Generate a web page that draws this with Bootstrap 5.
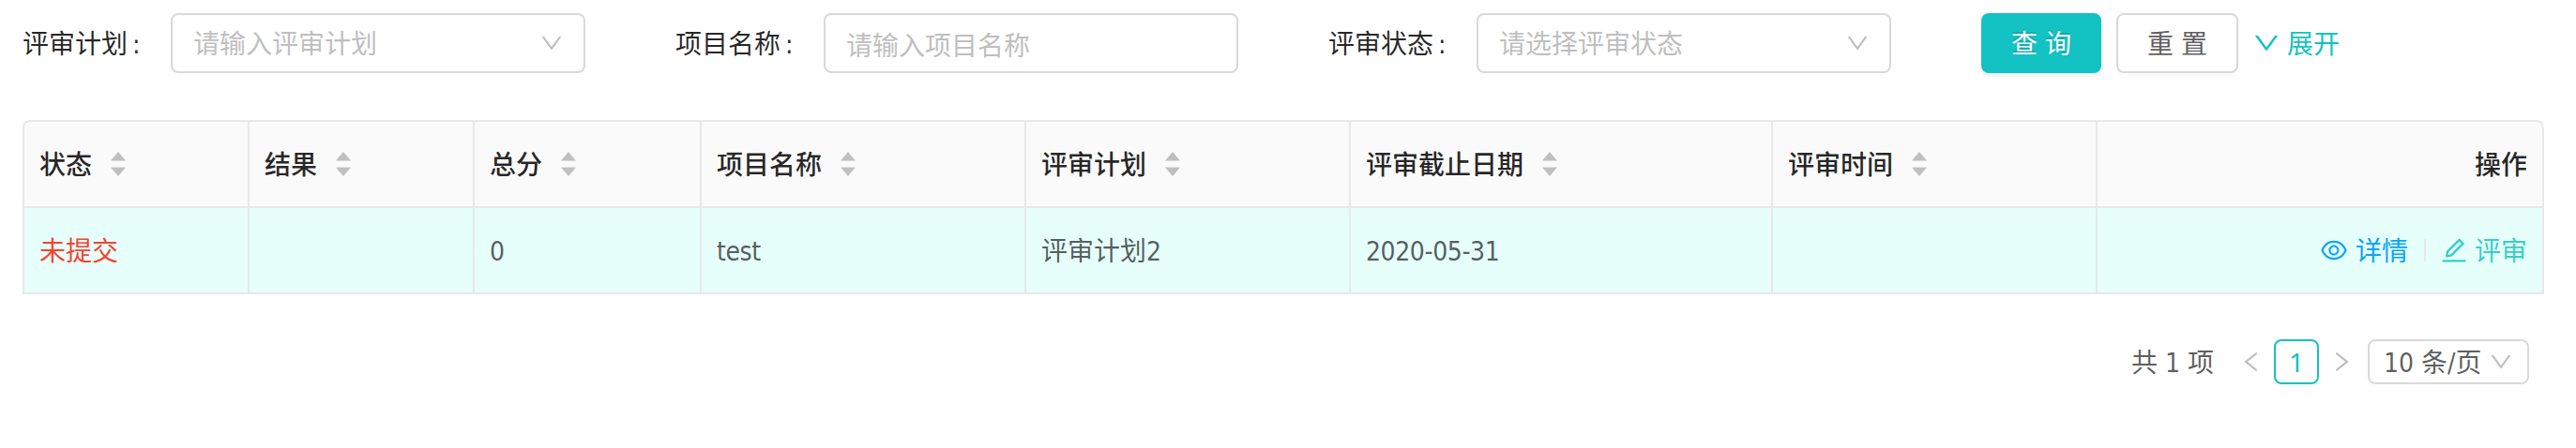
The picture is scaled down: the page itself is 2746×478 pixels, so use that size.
<!DOCTYPE html>
<html lang="zh-CN">
<head>
  <meta charset="UTF-8">
  <meta name="viewport" content="width=device-width, initial-scale=1.0">
  <title>评审列表</title>
  <link href="https://cdn.jsdelivr.net/npm/bootstrap@5.3.2/dist/css/bootstrap.min.css" rel="stylesheet">
  <style>
    body {
      font-family: "DejaVu Sans Condensed", "Noto Sans CJK SC", sans-serif;
      font-size: 28px;
      line-height: 42px;
      color: rgba(0, 0, 0, .65);
      background-color: #fff;
    }

    .page {
      padding: 14px 34px 0 24px;
    }

    .latin {
      letter-spacing: -.4px;
    }

    /* 文字与图标的视觉居中 */
    .txt {
      padding-top: 4px;
    }

    .icon {
      width: 28px;
      height: 28px;
      fill: currentColor;
      flex: none;
    }

    .icon-lg {
      width: 32px;
      height: 32px;
    }

    /* 查询条件 */
    .search-item {
      width: 696px;
      height: 64px;
    }

    .search-item label {
      width: 158px;
      color: rgba(0, 0, 0, .85);
    }

    .search-item label::after {
      content: ":";
      margin-left: 5px;
    }

    .field {
      width: 442px;
      height: 64px;
      padding: 0 20px 0 22px;
      border: 2px solid #d9d9d9;
      border-radius: 8px;
      font-size: 28px;
      line-height: 42px;
      color: #bfbfbf;
    }

    input.field {
      padding-top: 6px;
    }

    .field::placeholder {
      color: #bfbfbf;
    }

    .btn-search, .btn-reset {
      height: 64px;
      padding: 4px 0 0;
      border-radius: 8px;
      font-size: 28px;
      line-height: 42px;
    }

    .btn-search {
      width: 128px;
      color: #fff;
      background-color: #13c2c2;
      border: 2px solid #13c2c2;
      text-shadow: 0 -2px 0 rgba(0, 0, 0, .12);
      box-shadow: 0 4px 0 rgba(0, 0, 0, .045);
    }

    .btn-reset {
      width: 130px;
      margin-left: 16px;
      color: rgba(0, 0, 0, .65);
      background-color: #fff;
      border: 2px solid #d9d9d9;
      box-shadow: 0 4px 0 rgba(0, 0, 0, .015);
    }

    .expand {
      margin-left: 14px;
      gap: 6px;
      color: #13c2c2;
    }

    /* 表格 */
    .review-table {
      width: 2688px;
      margin: 50px 0 0;
      table-layout: fixed;
      border-collapse: separate;
      border-spacing: 0;
      border-top: 2px solid #e8e8e8;
      border-left: 2px solid #e8e8e8;
      border-radius: 8px 8px 0 0;
      color: rgba(0, 0, 0, .65);
    }

    .review-table > thead > tr > th,
    .review-table > tbody > tr > td {
      height: 92px;
      padding: 0 16px;
      border: solid #e8e8e8;
      border-width: 0 2px 2px 0;
      vertical-align: middle;
    }

    .review-table > thead > tr > th {
      background-color: #fafafa;
      color: rgba(0, 0, 0, .85);
      font-weight: 500;
    }

    .review-table > tbody > tr > td {
      background-color: #e6fffb;
      color: rgba(0, 0, 0, .65);
    }

    .review-table > tbody > tr > td.state {
      color: #f5432f;
    }

    .review-table > tbody > tr > td:not(:last-child) {
      padding-top: 4px;
    }

    .review-table th:first-child {
      border-top-left-radius: 6px;
    }

    .review-table th:last-child {
      border-top-right-radius: 8px;
    }

    .sorter {
      width: 16px;
      height: 26px;
      margin-left: 20px;
      fill: #bfbfbf;
    }

    .action {
      gap: 6px;
      color: #36cfc9;
    }

    .action-view {
      gap: 7px;
      color: #09a5fa;
    }

    .split {
      width: 2px;
      height: 24px;
      margin: 0 14px 0 17px;
      background-color: #e8e8e8;
    }

    /* 分页 */
    .pager {
      height: 48px;
      margin-top: 48px;
      padding-right: 16px;
    }

    .pager-step {
      width: 48px;
      color: #bfbfbf;
    }

    .pager-current {
      width: 48px;
      height: 48px;
      border: 2px solid #13c2c2;
      border-radius: 8px;
      color: #13c2c2;
      font-family: "Noto Sans", sans-serif;
    }

    .pager-size {
      width: 172px;
      height: 48px;
      margin-left: 4px;
      padding: 0 14px 0 15px;
      border: 2px solid #d9d9d9;
      border-radius: 8px;
      white-space: nowrap;
    }

    .pager-size .icon {
      color: #bfbfbf;
    }
  </style>
</head>
<body>
  <svg class="d-none">
    <symbol id="i-down" viewBox="0 0 1024 1024"><path d="M884 256h-75c-5.1 0-9.9 2.5-12.9 6.6L512 654.2 227.9 262.6c-3-4.1-7.8-6.6-12.9-6.6h-75c-6.5 0-10.3 7.4-6.5 12.7l352.6 486.1c12.8 17.6 39 17.6 51.7 0l352.6-486.1c3.9-5.3.1-12.7-6.4-12.7z"/></symbol>
    <symbol id="i-left" viewBox="0 0 1024 1024"><path d="M724 218.3V141c0-6.7-7.7-10.4-12.9-6.3L260.3 486.8a31.86 31.86 0 0 0 0 50.3l450.8 352.1c5.3 4.1 12.9.4 12.9-6.3v-77.3c0-4.9-2.3-9.6-6.1-12.6l-360-281 360-281.1c3.8-3 6.1-7.7 6.1-12.6z"/></symbol>
    <symbol id="i-right" viewBox="0 0 1024 1024"><path d="M765.7 486.8L314.9 134.7A7.97 7.97 0 0 0 302 141v77.3c0 4.9 2.3 9.6 6.1 12.6l360 281.1-360 281.1c-3.9 3-6.1 7.7-6.1 12.6V883c0 6.7 7.7 10.4 12.9 6.3l450.8-352.1a31.96 31.96 0 0 0 0-50.4z"/></symbol>
    <symbol id="i-eye" viewBox="0 0 1024 1024"><path d="M942.2 486.2C847.4 286.5 704.1 186 512 186c-192.2 0-335.4 100.5-430.2 300.3a60.3 60.3 0 0 0 0 51.5C176.6 737.5 319.9 838 512 838c192.2 0 335.4-100.5 430.2-300.3 7.7-16.2 7.7-35 0-51.5zM512 766c-161.3 0-279.4-81.8-362.7-254C232.6 339.8 350.7 258 512 258c161.3 0 279.4 81.8 362.7 254C791.5 684.2 673.4 766 512 766zm-4-430c-97.2 0-176 78.8-176 176s78.8 176 176 176 176-78.8 176-176-78.8-176-176-176zm0 288c-61.9 0-112-50.1-112-112s50.1-112 112-112 112 50.1 112 112-50.1 112-112 112z"/></symbol>
    <symbol id="i-edit" viewBox="0 0 1024 1024"><path d="M257.7 752c2 0 4-.2 6-.5L431.9 722c2-.4 3.9-1.3 5.3-2.8l423.9-423.9a9.96 9.96 0 0 0 0-14.1L694.9 114.9c-1.9-1.9-4.4-2.9-7.1-2.9s-5.2 1-7.1 2.9L256.8 538.8c-1.5 1.5-2.4 3.3-2.8 5.3l-29.5 168.2a33.5 33.5 0 0 0 9.4 29.8c6.6 6.4 14.9 9.9 23.8 9.9zm67.4-174.4L687.8 215l73.3 73.3-362.7 362.6-88.9 15.7 15.6-89zM880 836H144c-17.7 0-32 14.3-32 32v36c0 4.4 3.6 8 8 8h784c4.4 0 8-3.6 8-8v-36c0-17.7-14.3-32-32-32z"/></symbol>
    <symbol id="i-sort" viewBox="0 0 16 26"><path d="M8 0l8 9.5H0zM8 26l8-9.5H0z"/></symbol>
  </svg>

  <div class="page">
    <!-- 查询条件 -->
    <form class="d-flex align-items-center">
      <div class="search-item d-flex align-items-center">
        <label class="txt">评审计划</label>
        <div class="field d-flex align-items-center justify-content-between">
          <span class="txt">请输入评审计划</span>
          <svg class="icon"><use href="#i-down"/></svg>
        </div>
      </div>
      <div class="search-item d-flex align-items-center">
        <label class="txt" for="project-name">项目名称</label>
        <input type="text" class="form-control field" id="project-name" placeholder="请输入项目名称">
      </div>
      <div class="search-item d-flex align-items-center">
        <label class="txt">评审状态</label>
        <div class="field d-flex align-items-center justify-content-between">
          <span class="txt">请选择评审状态</span>
          <svg class="icon"><use href="#i-down"/></svg>
        </div>
      </div>
      <button type="button" class="btn btn-search">查 询</button>
      <button type="button" class="btn btn-reset">重 置</button>
      <a class="expand d-flex align-items-center text-decoration-none">
        <svg class="icon icon-lg"><use href="#i-down"/></svg>
        <span class="txt">展开</span>
      </a>
    </form>

    <!-- 评审列表 -->
    <table class="table review-table">
      <colgroup id="review-cols"></colgroup>
      <thead>
        <tr id="review-head"></tr>
      </thead>
      <tbody>
        <tr>
          <td class="state">未提交</td>
          <td></td>
          <td class="latin">0</td>
          <td class="latin">test</td>
          <td>评审计划2</td>
          <td class="latin">2020-05-31</td>
          <td></td>
          <td>
            <div class="d-flex align-items-center justify-content-end">
              <a class="action action-view d-flex align-items-center text-decoration-none"><svg class="icon icon-lg"><use href="#i-eye"/></svg><span class="txt">详情</span></a>
              <span class="split"></span>
              <a class="action d-flex align-items-center text-decoration-none"><svg class="icon icon-lg"><use href="#i-edit"/></svg><span class="txt">评审</span></a>
            </div>
          </td>
        </tr>
      </tbody>
    </table>

    <!-- 分页 -->
    <div class="pager d-flex align-items-center justify-content-end">
      <span class="txt me-3">共 1 项</span>
      <span class="pager-step d-flex justify-content-center"><svg class="icon"><use href="#i-left"/></svg></span>
      <span class="pager-current d-flex align-items-center justify-content-center">1</span>
      <span class="pager-step d-flex justify-content-center"><svg class="icon"><use href="#i-right"/></svg></span>
      <div class="pager-size d-flex align-items-center justify-content-between">
        <span class="txt">10 条/页</span>
        <svg class="icon"><use href="#i-down"/></svg>
      </div>
    </div>
  </div>

  <script src="https://cdn.jsdelivr.net/npm/bootstrap@5.3.2/dist/js/bootstrap.bundle.min.js"></script>
  <script>
    const columns = [
      { title: "状态", width: 240 },
      { title: "结果", width: 240 },
      { title: "总分", width: 242 },
      { title: "项目名称", width: 346 },
      { title: "评审计划", width: 346 },
      { title: "评审截止日期", width: 450 },
      { title: "评审时间", width: 346 },
      { title: "操作", width: 476, fixed: true },
    ];

    columns.forEach((column) => {
      const side = column.fixed ? "justify-content-end" : "";
      const sorter = column.fixed ? "" : `<svg class="sorter"><use href="#i-sort"/></svg>`;

      document.getElementById("review-cols").innerHTML += `<col style="width: ${column.width}px">`;
      document.getElementById("review-head").innerHTML += `
        <th>
          <div class="d-flex align-items-center ${side}"><span class="txt">${column.title}</span>${sorter}</div>
        </th>
      `;
    });
  </script>
</body>
</html>
